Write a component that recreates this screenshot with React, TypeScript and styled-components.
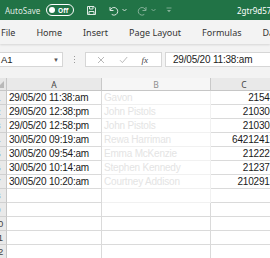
import styled, { createGlobalStyle } from 'styled-components'

const GlobalStyle = createGlobalStyle`
	html, body {
		margin: 0;
		padding: 0;
		overflow: hidden;
		background: #ffffff;
	}
`

const uiFont = `"Noto Sans", "Open Sans", sans-serif`
const cellFont = `"Liberation Sans", Arial, sans-serif`

const Window = styled.div`
	width: 270px;
	height: 258px;
	overflow: hidden;
	display: flex;
	flex-direction: column;
	background: #ffffff;
`

const TitleBar = styled.div`
	height: 20px;
	flex: none;
	background: #217346;
	display: flex;
	align-items: center;
	padding-left: 5px;
	font-family: ${uiFont};
	color: rgba(255, 255, 255, 0.88);
	white-space: nowrap;
	overflow: hidden;
`

const AutoSave = styled.span`
	font-size: 8px;
	width: 41px;
	flex: none;
`

const Toggle = styled.div`
	width: 24px;
	height: 10px;
	border: 1px solid #ffffff;
	border-radius: 6px;
	display: flex;
	align-items: center;
	gap: 3px;
	padding-left: 2px;
	flex: none;
	font-size: 6.5px;
	font-weight: 700;
	color: #ffffff;
`

const Knob = styled.span`
	width: 6px;
	height: 6px;
	border-radius: 50%;
	background: #ffffff;
`

const Icon = styled.svg<{ $dim?: boolean }>`
	flex: none;
	opacity: ${({ $dim }) => ($dim ? 0.45 : 0.85)};
`

const TitleText = styled.span`
	font-size: 8px;
	color: #ffffff;
	margin-left: 65px;
`

const Ribbon = styled.div`
	height: 24px;
	flex: none;
	background: #f3f3f3;
	display: flex;
	align-items: center;
	font-family: ${uiFont};
	font-size: 9px;
	color: #333333;
	white-space: nowrap;
	box-shadow: 0 1px 2px rgba(0, 0, 0, 0.12);
	position: relative;
	z-index: 1;
	gap: 21px;
	padding-left: 1px;
`

const Tab = styled.span``

const FormulaRow = styled.div`
	height: 34px;
	flex: none;
	background: #f3f3f3;
	display: flex;
	align-items: flex-start;
	padding-top: 8px;
	box-sizing: border-box;
	font-family: ${uiFont};
`

const NameBox = styled.div`
	width: 64px;
	height: 15px;
	margin-left: -1px;
	box-sizing: border-box;
	background: #ffffff;
	border: 1px solid #d6d6d6;
	display: flex;
	align-items: center;
	justify-content: space-between;
	padding: 0 3px 0 1px;
	font-family: ${cellFont};
	font-size: 9.5px;
	color: #222222;
`

const Caret = styled.span`
	font-size: 6px;
	color: #555555;
`

const Dots = styled.div`
	width: 22px;
	height: 15px;
	display: flex;
	flex-direction: column;
	align-items: center;
	justify-content: center;
	gap: 2px;
	& span {
		width: 1px;
		height: 1px;
		background: #9a9a9a;
	}
`

const FnButtons = styled.div`
	width: 77px;
	height: 15px;
	box-sizing: border-box;
	background: #ffffff;
	border: 1px solid #d6d6d6;
	display: flex;
	align-items: center;
	justify-content: space-around;
	padding: 0 6px 0 4px;
`

const Fx = styled.span`
	font-family: "Liberation Serif", serif;
	font-style: italic;
	font-size: 9px;
	color: #444444;
`

const FormulaInput = styled.div`
	flex: 1;
	height: 15px;
	margin-left: 3px;
	box-sizing: border-box;
	background: #ffffff;
	border: 1px solid #d6d6d6;
	border-right: none;
	display: flex;
	align-items: center;
	padding-left: 7px;
	font-family: ${cellFont};
	font-size: 10px;
	letter-spacing: -0.2px;
	color: #222222;
	white-space: nowrap;
`

const Sheet = styled.div`
	display: grid;
	grid-template-columns: 17px 95px 109px 67px;
	grid-template-rows: 13px;
	grid-auto-rows: 14px;
	margin-left: -10px;
	font-family: ${cellFont};
	font-size: 10px;
	letter-spacing: -0.2px;
`

const Corner = styled.div`
	background: #e6e6e6;
	border-right: 1px solid #c6c6c6;
	border-bottom: 1px solid #c6c6c6;
	position: relative;
	&::after {
		content: "";
		position: absolute;
		right: 2px;
		bottom: 2px;
		border-left: 7px solid transparent;
		border-bottom: 7px solid #b8b8b8;
	}
`

const ColHead = styled.div<{ $faded?: boolean }>`
	background: ${({ $faded }) => ($faded ? '#f6f6f6' : '#e9e9e9')};
	border-right: 1px solid #c9c9c9;
	border-bottom: 1px solid #c6c6c6;
	display: flex;
	align-items: center;
	justify-content: center;
	font-family: ${uiFont};
	font-size: 8.5px;
	color: ${({ $faded }) => ($faded ? '#8f8f8f' : '#444444')};
	letter-spacing: 0;
	box-sizing: border-box;
`

const RowHead = styled.div`
	background: #e9e9e9;
	border-right: 1px solid #c6c6c6;
	border-bottom: 1px solid #d0d0d0;
	display: flex;
	align-items: center;
	justify-content: center;
	font-size: 9.5px;
	color: #444444;
	letter-spacing: 0;
	box-sizing: border-box;
`

const Cell = styled.div<{ $align?: 'left' | 'right'; $faded?: boolean }>`
	border-right: 1px solid ${({ $faded }) => ($faded ? '#f1f1f1' : '#dadada')};
	border-bottom: 1px solid ${({ $faded }) => ($faded ? '#f1f1f1' : '#dadada')};
	box-sizing: border-box;
	display: flex;
	align-items: center;
	justify-content: ${({ $align }) => ($align === 'right' ? 'flex-end' : 'flex-start')};
	padding: 0 2px 0 2px;
	white-space: nowrap;
	overflow: hidden;
	color: ${({ $faded }) => ($faded ? '#e4e4e4' : '#1a1a1a')};
`

const rows = [
	{ date: '29/05/20 11:38:am', name: 'Gavon', code: '21545' },
	{ date: '29/05/20 12:38:pm', name: 'John Pistols', code: '210306' },
	{ date: '29/05/20 12:58:pm', name: 'John Pistols', code: '210306' },
	{ date: '30/05/20 09:19:am', name: 'Rewa Harriman', code: '64212417' },
	{ date: '30/05/20 09:54:am', name: 'Emma McKenzie', code: '212223' },
	{ date: '30/05/20 10:14:am', name: 'Stephen Kennedy', code: '212371' },
	{ date: '30/05/20 10:20:am', name: 'Courtney Addison', code: '2102917' },
]

const SaveIcon = () => (
	<Icon width="11" height="11" viewBox="0 0 11 11" fill="none" stroke="#fff" strokeWidth="1" style={{ marginLeft: 12 }}>
		<path d="M1.5 1.5h6.5l1.5 1.5v6.5h-8z" />
		<path d="M3.5 1.5v2.5h3.5v-2.5" />
		<path d="M3 9.5v-3h5v3" />
	</Icon>
)

const UndoIcon = ({ dim, flip }: { dim?: boolean; flip?: boolean }) => (
	<Icon $dim={dim} width="11" height="11" viewBox="0 0 11 11" fill="none" stroke="#fff" strokeWidth="1" style={{ marginLeft: dim ? 10 : 11, transform: flip ? 'scaleX(-1)' : undefined }}>
		<path d="M2 2v3.5h3.5" />
		<path d="M2.3 5.2a3.8 3.8 0 1 1 1.4 4.2" />
	</Icon>
)

const SmallCaret = ({ dim }: { dim?: boolean }) => (
	<Icon $dim={dim} width="5" height="4" viewBox="0 0 5 4" fill="none" stroke="#fff" strokeWidth="0.9" style={{ marginLeft: 3 }}>
		<path d="M0.5 1l2 2 2-2" />
	</Icon>
)

const Customize = () => (
	<Icon $dim width="6" height="6" viewBox="0 0 6 6" fill="#fff" stroke="#fff" strokeWidth="0.9" style={{ marginLeft: 10 }}>
		<path d="M0.5 1h5" fill="none" />
		<path d="M1 3h4l-2 2.2z" stroke="none" />
	</Icon>
)

export default function App() {
	return (
		<Window>
			<GlobalStyle />
			<TitleBar>
				<AutoSave>AutoSave</AutoSave>
				<Toggle>
					<Knob />
					<span>Off</span>
				</Toggle>
				<SaveIcon />
				<UndoIcon />
				<SmallCaret />
				<UndoIcon dim flip />
				<SmallCaret dim />
				<Customize />
				<TitleText>2gtr9d57-4b1e-Book1 - Excel</TitleText>
			</TitleBar>
			<Ribbon>
				<Tab>File</Tab>
				<Tab>Home</Tab>
				<Tab>Insert</Tab>
				<Tab>Page Layout</Tab>
				<Tab>Formulas</Tab>
				<Tab>Data</Tab>
			</Ribbon>
			<FormulaRow>
				<NameBox>
					<span>A1</span>
					<Caret>▼</Caret>
				</NameBox>
				<Dots>
					<span />
					<span />
					<span />
				</Dots>
				<FnButtons>
					<Icon $dim width="8" height="8" viewBox="0 0 8 8" stroke="#555" strokeWidth="0.9">
						<path d="M1 1l6 6M7 1l-6 6" />
					</Icon>
					<Icon $dim width="9" height="8" viewBox="0 0 9 8" fill="none" stroke="#555" strokeWidth="0.9">
						<path d="M1 4.2l2.4 2.4 4.8-5.6" />
					</Icon>
					<Fx>fx</Fx>
				</FnButtons>
				<FormulaInput>29/05/20 11:38:am</FormulaInput>
			</FormulaRow>
			<Sheet>
				<Corner />
				<ColHead>A</ColHead>
				<ColHead $faded>B</ColHead>
				<ColHead>C</ColHead>
				{Array.from({ length: 12 }, (_, i) => {
					const row = rows[i]
					return [
						<RowHead key={`h${i}`}>{i + 1}</RowHead>,
						<Cell key={`a${i}`}>{row?.date}</Cell>,
						<Cell key={`b${i}`} $faded={i < 8}>{row?.name}</Cell>,
						<Cell key={`c${i}`} $align="right">{row?.code}</Cell>,
					]
				})}
			</Sheet>
		</Window>
	)
}
